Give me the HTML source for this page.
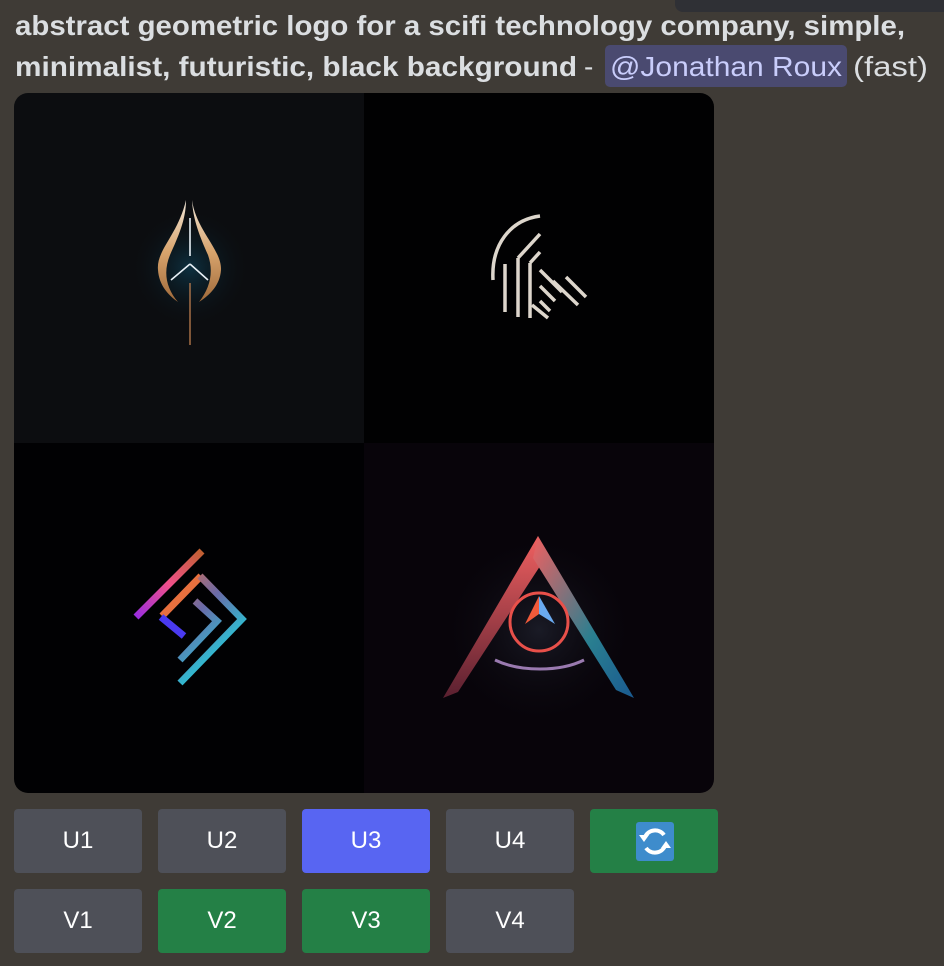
<!DOCTYPE html>
<html><head><meta charset="utf-8"><style>
html,body{margin:0;padding:0;background:#3f3b36;width:944px;height:966px;overflow:hidden;position:relative;font-family:"Liberation Sans",sans-serif}
.tab{position:absolute;left:675px;top:-10px;width:300px;height:22px;background:#2f3035;border-radius:8px}
.hd{position:absolute;left:0;top:0}
.m{position:absolute;left:605px;top:45px;width:242px;height:42px;background:#4a4a70;border-radius:5px}
.img{position:absolute;left:14px;top:93px;width:700px;height:700px;border-radius:14px;overflow:hidden}
.b{position:absolute;width:128px;height:64px;border-radius:4px;color:#fff;font-size:24px;text-align:center;line-height:64px;background:#4e5058}
.g{background:#248046}.p{background:#5865f2}
</style></head><body>
<div class="tab"></div>
<div class="m"></div>
<svg class="hd" width="944" height="92" xmlns="http://www.w3.org/2000/svg" font-family="Liberation Sans, sans-serif" font-size="28">
<text x="15" y="35" fill="#dbdee1" font-weight="bold" textLength="890" lengthAdjust="spacingAndGlyphs">abstract geometric logo for a scifi technology company, simple,</text>
<text x="15" y="76" fill="#dbdee1" font-weight="bold" textLength="562" lengthAdjust="spacingAndGlyphs">minimalist, futuristic, black background</text>
<text x="584" y="76" fill="#dbdee1">-</text>
<text x="610" y="76" fill="#c9cdfb" textLength="232" lengthAdjust="spacingAndGlyphs">@Jonathan Roux</text>
<text x="853" y="76" fill="#dbdee1" textLength="75" lengthAdjust="spacingAndGlyphs">(fast)</text>
</svg>
<div class="img">
<svg width="700" height="700" viewBox="14 93 700 700" xmlns="http://www.w3.org/2000/svg">
<defs>
<radialGradient id="gl" cx="0.5" cy="0.5" r="0.5"><stop offset="0" stop-color="#0d3040"/><stop offset="1" stop-color="#0c0d10" stop-opacity="0"/></radialGradient>
<radialGradient id="gr" cx="0.5" cy="0.5" r="0.5"><stop offset="0" stop-color="#1a1b26"/><stop offset="1" stop-color="#08040a" stop-opacity="0"/></radialGradient>
<linearGradient id="gold" x1="0" y1="0" x2="0" y2="1"><stop offset="0" stop-color="#f0e6d8"/><stop offset="0.5" stop-color="#d9a56e"/><stop offset="1" stop-color="#a06a3a"/></linearGradient>
<linearGradient id="c1" gradientUnits="userSpaceOnUse" x1="136" y1="617" x2="202" y2="551"><stop offset="0" stop-color="#9a2de0"/><stop offset="0.5" stop-color="#f0508a"/><stop offset="1" stop-color="#c06030"/></linearGradient>
<linearGradient id="c2" gradientUnits="userSpaceOnUse" x1="160" y1="573" x2="244" y2="660"><stop offset="0" stop-color="#f07040"/><stop offset="0.45" stop-color="#6a6aa8"/><stop offset="1" stop-color="#10e8e8"/></linearGradient>
<linearGradient id="lr" x1="0" y1="0" x2="0" y2="1"><stop offset="0" stop-color="#f06060"/><stop offset="1" stop-color="#5a2030"/></linearGradient>
<linearGradient id="rr" x1="0" y1="0" x2="1" y2="1"><stop offset="0" stop-color="#f06060"/><stop offset="0.6" stop-color="#2a7f90"/><stop offset="1" stop-color="#1a5a90"/></linearGradient>
</defs>
<rect x="14" y="93" width="350" height="350" fill="#0c0d10"/>
<rect x="364" y="93" width="350" height="350" fill="#010102"/>
<rect x="14" y="443" width="350" height="350" fill="#010103"/>
<rect x="364" y="443" width="350" height="350" fill="#08040a"/>
<circle cx="190" cy="268" r="60" fill="url(#gl)"/>
<path d="M186,200 C178,235 156,250 158,270 C159,285 168,295 178,302 C166,288 163,272 170,255 C178,237 186,220 186,200Z" fill="url(#gold)"/>
<path d="M192,200 C196,230 222,250 221,270 C220,285 210,295 199,302 C210,288 214,272 208,255 C200,237 193,220 192,200Z" fill="url(#gold)"/>
<path d="M190,218 L190,256 M190,264 L171,280 M190,264 L208,280" stroke="#e8f0f6" stroke-width="1.6" fill="none"/>
<path d="M190,283 L190,345" stroke="#c08050" stroke-width="1.6" fill="none" opacity="0.8"/>
<g stroke="#ddd6cc" stroke-width="3.5" fill="none">
<path d="M493,280 C491,245 510,220 540,216"/>
<path d="M505,264 L505,312 M518,258 L518,317 M518,258 L540,234 M530,263 L530,318 M530,263 L540,252"/>
<path d="M540,270 L562,292 M540,286 L555,301 M540,301 L550,311 M553,281 L578,305 M566,277 L586,297 M532,305 L548,318"/>
</g>
<path d="M202,551 L136,617" stroke="url(#c1)" stroke-width="7" fill="none"/>
<path d="M201,576 L162,616" stroke="#e8703e" stroke-width="7" fill="none"/>
<path d="M161,617 L184,636" stroke="#4a3af0" stroke-width="7" fill="none"/>
<path d="M200,576 L242,619 L180,683" stroke="url(#c2)" stroke-width="7" fill="none" stroke-linejoin="miter"/>
<path d="M195,601 L217,621 L180,660" stroke="url(#c2)" stroke-width="7" fill="none"/>
<circle cx="539" cy="630" r="100" fill="url(#gr)"/>
<path d="M538,536 L544,560 L458,692 L443,698Z" fill="url(#lr)"/>
<path d="M538,536 L634,698 L616,690 L533,558Z" fill="url(#rr)"/>
<path d="M495,660 C520,672 560,672 584,660" stroke="#9a7ab0" stroke-width="3" fill="none"/>
<circle cx="539" cy="622" r="29" fill="none" stroke="#e8504a" stroke-width="3"/>
<path d="M539,596 L525,624 L539,614Z" fill="#f05a3a"/>
<path d="M539,596 L555,624 L539,614Z" fill="#6aaaf0"/>
</svg>
</div>
<div class="b" style="left:14px;top:809px">U1</div>
<div class="b" style="left:158px;top:809px">U2</div>
<div class="b p" style="left:302px;top:809px">U3</div>
<div class="b" style="left:446px;top:809px">U4</div>
<div class="b g" style="left:590px;top:809px">
<svg width="38" height="39" style="position:absolute;left:46px;top:13px" viewBox="0 0 38 39"><rect width="38" height="39" rx="3" fill="#3e8ccc"/>
<path d="M28,13 A11,11 0 0 0 9,15" stroke="#fff" stroke-width="4" fill="none"/>
<path d="M10,26 A11,11 0 0 0 29,24" stroke="#fff" stroke-width="4" fill="none"/>
<path d="M3,13 L13,13 L8,20Z" fill="#fff"/>
<path d="M35,26 L25,26 L30,19Z" fill="#fff"/>
</svg></div>
<div class="b" style="left:14px;top:889px">V1</div>
<div class="b g" style="left:158px;top:889px">V2</div>
<div class="b g" style="left:302px;top:889px">V3</div>
<div class="b" style="left:446px;top:889px">V4</div>
</body></html>
